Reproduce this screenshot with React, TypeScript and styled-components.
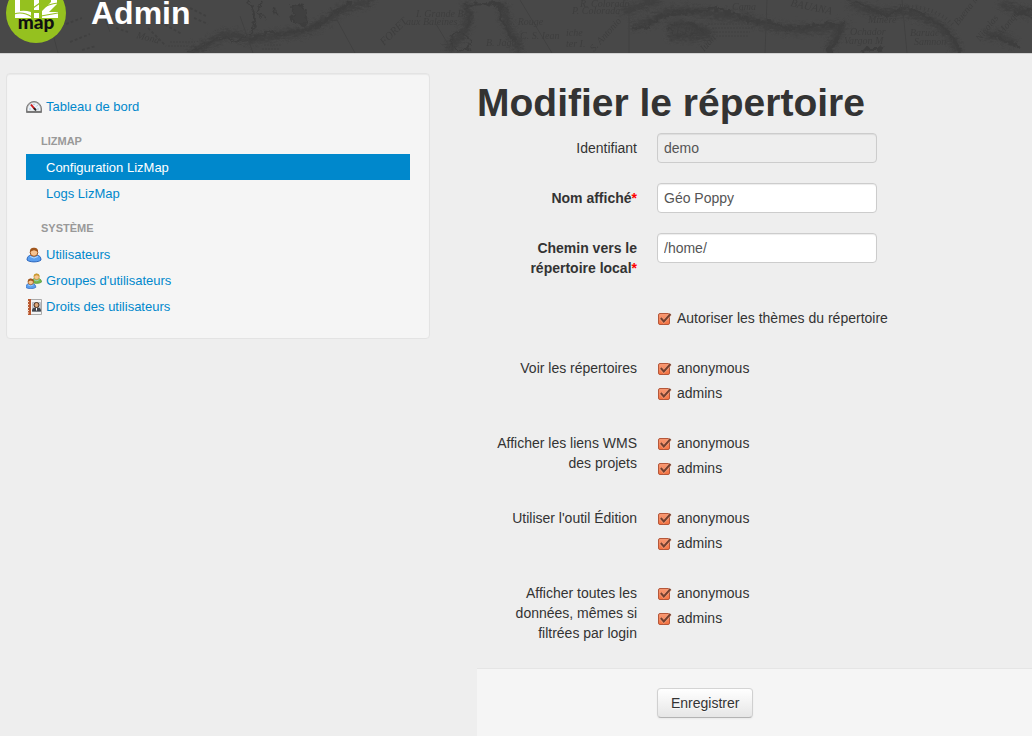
import React, { useState } from "react";
import styled, { createGlobalStyle, css } from "styled-components";

const GlobalStyle = createGlobalStyle`
  *, *::before, *::after { box-sizing: border-box; }
  html { background: #eee; }
  body {
    margin: 0;
    background: #eee;
    color: #333;
    font-family: "Liberation Sans", Arial, Helvetica, sans-serif;
    font-size: 14px;
    line-height: 20px;
  }
`;

const Page = styled.div`
  display: flex;
  flex-direction: column;
  min-height: 100vh;
`;

const Header = styled.header`
  position: relative;
  display: flex;
  align-items: flex-end;
  gap: 25px;
  height: 54px;
  padding: 0 6px 10px;
  overflow: hidden;
  background: #484848;
  border-bottom: 1px solid #d2d2d2;
`;

const HeaderMap = styled.svg`
  position: absolute;
  inset: 0;
  width: 100%;
  height: 100%;
`;

const Logo = styled.svg`
  position: relative;
  flex: none;
  width: 60px;
  height: 60px;
`;

const SiteTitle = styled.div`
  position: relative;
  padding-bottom: 10px;
  color: #fff;
  font-size: 32px;
  font-weight: bold;
  line-height: 40px;
`;

const Columns = styled.div`
  display: grid;
  grid-template-columns: minmax(0, 424fr) minmax(0, 555fr);
  column-gap: 47px;
  align-items: start;
  padding: 19px 0 0 6px;
`;

const Sidebar = styled.nav`
  padding: 19px;
  background: #f5f5f5;
  border: 1px solid #e3e3e3;
  border-radius: 4px;
  box-shadow: inset 0 1px 1px rgba(0, 0, 0, 0.05);
  font-size: 13px;
`;

const NavList = styled.ul`
  margin: 0;
  padding: 0;
  list-style: none;
`;

const NavHeading = styled.h2`
  margin: 9px 0 0;
  padding: 3px 15px;
  color: #999;
  font-size: 11px;
  font-weight: bold;
  line-height: 20px;
  text-transform: uppercase;
`;

const NavLink = styled.a<{ $active?: boolean }>`
  display: grid;
  grid-template-columns: 16px 1fr;
  column-gap: 4px;
  align-items: center;
  padding: 4px 0 2px;
  color: ${(p) => (p.$active ? "#fff" : "#08c")};
  background: ${(p) => (p.$active ? "#08c" : "transparent")};
  text-decoration: none;
`;

const NavIcon = styled.svg`
  display: block;
  width: 16px;
  height: 16px;
`;

const NavText = styled.span`
  grid-column: 2;
`;

const Main = styled.main`
  padding-top: 10px;
`;

const PageTitle = styled.h1`
  margin: 0 0 10px;
  font-size: 39px;
  font-weight: bold;
  line-height: 40px;
`;

const rowStyle = css`
  display: grid;
  grid-template-columns: 160px minmax(0, 1fr);
  column-gap: 20px;
  align-items: start;
  margin: 0 0 20px;
`;

const Row = styled.div`
  ${rowStyle}
`;

const labelStyle = css`
  padding: 5px 0;
  text-align: right;
`;

const Label = styled.label<{ $strong?: boolean }>`
  ${labelStyle}
  font-weight: ${(p) => (p.$strong ? "bold" : "normal")};
`;

const GroupLabel = styled.span`
  ${labelStyle}
`;

const Required = styled.span`
  color: #f00;
`;

const TextInput = styled.input`
  width: 220px;
  max-width: 100%;
  height: 30px;
  padding: 4px 6px;
  border: 1px solid #ccc;
  border-radius: 4px;
  background: #fff;
  box-shadow: inset 0 1px 1px rgba(0, 0, 0, 0.075);
  color: #555;
  font: inherit;

  &:disabled {
    background: #eee;
    opacity: 1;
  }
`;

const Choices = styled.div`
  grid-column: 2;
  padding-bottom: 5px;
`;

const Choice = styled.label`
  display: grid;
  grid-template-columns: 16px 1fr;
  column-gap: 4px;
  align-items: center;
  padding-top: 5px;
`;

const TickHolder = styled.span`
  position: relative;
  width: 16px;
  height: 16px;
`;

const TickInput = styled.input`
  appearance: none;
  display: block;
  width: 16px;
  height: 16px;
  margin: 0;
`;

const TickMark = styled.svg`
  position: absolute;
  inset: 0;
  width: 16px;
  height: 16px;
  pointer-events: none;
`;

const Actions = styled.div`
  padding: 19px 20px 20px 180px;
  background: #f5f5f5;
  border-top: 1px solid #e5e5e5;
`;

const SubmitButton = styled.button`
  height: 30px;
  padding: 4px 13px;
  border: 1px solid #ccc;
  border-color: #d4d4d4 #d0d0d0 #b3b3b3;
  border-radius: 4px;
  background: linear-gradient(to bottom, #fff, #e6e6e6);
  box-shadow: inset 0 1px 0 rgba(255, 255, 255, 0.2), 0 1px 2px rgba(0, 0, 0, 0.05);
  color: #333;
  font: inherit;
  line-height: 20px;
  text-shadow: 0 1px 1px rgba(255, 255, 255, 0.75);
`;

function OldMap() {
  return (
    <HeaderMap aria-hidden="true">
      <defs>
        <filter id="rough" x="-5%" y="-20%" width="110%" height="140%">
          <feTurbulence type="fractalNoise" baseFrequency="0.16" numOctaves="3" seed="4" />
          <feDisplacementMap in="SourceGraphic" scale="9" xChannelSelector="R" yChannelSelector="G" />
        </filter>
        <filter id="shade" x="-5%" y="-30%" width="110%" height="160%">
          <feGaussianBlur stdDeviation="2" result="soft" />
          <feTurbulence type="fractalNoise" baseFrequency="0.2 0.5" numOctaves="2" seed="9" result="noise" />
          <feDisplacementMap in="soft" in2="noise" scale="12" xChannelSelector="R" yChannelSelector="G" />
        </filter>
        <pattern id="oldmap" width="1032" height="53" patternUnits="userSpaceOnUse">
          <rect width="1032" height="53" fill="#484848" />
          <g fill="none" stroke="#3e3e3e" strokeWidth="8" opacity="0.9" filter="url(#shade)">
            <path d="M190 53Q205 46 218 38T248 40Q285 34 305 31Q325 22 341 10L372 0" />
            <path d="M466 3Q472 20 462 36Q454 40 448 50M502 3Q505 22 512 36Q522 44 516 52" />
            <path d="M632 26Q650 24 662 14Q680 8 700 12Q724 16 748 18Q758 24 780 28Q800 32 842 26Q834 42 828 50" />
            <path d="M850 2Q870 14 890 12Q912 10 928 20Q948 26 958 52M985 36Q1000 32 1014 44" />
            <path d="M668 26Q684 22 704 30T668 36M622 12Q640 6 660 0M1000 4L1032 14" />
          </g>
          <g fill="none" stroke="#3d3d3d" strokeWidth="1.6" filter="url(#rough)">
            <path d="M184 53Q202 49 214 40Q224 35 232 42Q242 40 251 32Q258 26 254 14L249 0" />
            <path d="M250 40L266 32L280 35L302 31Q320 25 330 16L350 3" strokeWidth="3" />
            <path d="M293 6Q300 3 307 9L306 25L292 21Z" fill="#404040" />
            <path d="M262 2L258 12L266 20M272 8L278 16" />
            <path d="M465 6Q480 2 501 5L500 18L508 30L514 40M465 8Q474 18 466 28" strokeWidth="3" />
            <path d="M450 42Q454 30 464 34Q474 42 468 50Q456 54 450 42Z" />
            <path d="M633 29Q648 28 658 18Q672 12 690 12Q710 8 722 10L748 20M746 22L768 21L786 29L804 27L824 25L842 24L836 42L828 52" strokeWidth="3" />
            <path d="M667 28Q684 18 704 29Q696 38 674 35Z" />
            <path d="M854 0L872 9L886 15L900 10Q920 8 932 20L946 28L956 44L962 53" strokeWidth="3" />
            <path d="M1032 16L1018 14L1032 8M992 35L1010 42L1020 48M860 53Q872 46 884 50" strokeWidth="3" />
          </g>
          <g fill="none" stroke="#404040">
            <path d="M44 0L58 53M98 0L110 32M240 16L253 53M330 7L355 53M520 0L552 53M629 4V53M767 0L765 53M902 0L907 53M436 24L448 44" />
            <path d="M900 7Q934 5 953 25" strokeWidth="4" strokeDasharray="1 3" />
            <path d="M708 24H756M712 28H754M704 32H750M716 36H748M170 42H195M168 46H188M264 45H282M262 49H280" strokeDasharray="2 1" />
            <path d="M66 24L82 18M70 42L90 34M82 50L96 46M108 14L122 20M116 28L128 32M190 8L206 16M194 18L208 24M148 28L166 46M156 20L182 34" strokeDasharray="3 2" strokeWidth="2" />
          </g>
          <g fill="#3d3d3d" fontFamily="Liberation Serif, serif" fontStyle="italic" fontSize="10">
            <text x="416" y="17">I. Grande B.</text>
            <text x="406" y="25">aux Baleines</text>
            <text x="506" y="25">C. Rouge</text>
            <text x="520" y="39">C. S. Iean</text>
            <text x="486" y="46">B. Jago</text>
            <text x="580" y="7">R. Colorado</text>
            <text x="572" y="14">P. Colorada</text>
            <text x="566" y="36">iche</text>
            <text x="566" y="47">ter I.</text>
            <text x="868" y="23">Minere</text>
            <text x="850" y="35">Ochador</text>
            <text x="844" y="44">Vargon M</text>
            <text x="910" y="36">Baruac e</text>
            <text x="914" y="45">Samnon</text>
            <text x="676" y="34">I. Pinos</text>
            <text x="732" y="10">Cama</text>
            <text transform="translate(790 6) rotate(12)" fontSize="11">BAUANA</text>
            <text transform="translate(384 46) rotate(-45)" fontSize="11">FORET</text>
            <text transform="translate(594 52) rotate(-48)">S. Antonio</text>
            <text transform="translate(958 26) rotate(-52)">Buena M</text>
            <text transform="translate(980 42) rotate(-52)">Nicolas</text>
            <text transform="translate(1002 36) rotate(-52)">Monquia</text>
            <text transform="translate(704 52) rotate(-48)">Iuan</text>
            <text transform="translate(136 38) rotate(14)">Mona</text>
          </g>
        </pattern>
      </defs>
      <rect width="100%" height="100%" fill="url(#oldmap)" />
    </HeaderMap>
  );
}

function LizmapLogo() {
  return (
    <Logo viewBox="0 0 60 60" role="img" aria-label="Lizmap">
      <circle cx="30" cy="30" r="30" fill="#95c11f" />
      <g fill="#fff">
        <path d="M9 6h5v22q5-1 11 1v6H9z" />
        <path d="M28 12h5v15h-5zM28 30h5v5h-5z" />
        <path d="M36 12h15v9l-8 8h9v6H36v-7l9-9v-2h-9z" />
      </g>
      <g fill="none" stroke="#95c11f" strokeWidth="1.200">
        <path d="M8 31Q17 28 26 34M27 25L34 20M35 26Q42 21 52 20M35 33L52 30" />
      </g>
      <text x="30" y="46" textAnchor="middle" fill="#111" fontFamily="Lato, sans-serif" fontWeight="900" fontSize="19">
        map
      </text>
    </Logo>
  );
}

function GaugeIcon() {
  return (
    <NavIcon viewBox="0 0 16 16" aria-hidden="true">
      <path d="M.5 13.5V10a7.5 7.5 0 0 1 15 0v3.500z" fill="#a4a4a4" stroke="#7c7c7c" />
      <path d="M2 11.500V10a6 6 0 0 1 12 0v1.500z" fill="#e9f1f8" stroke="#fff" strokeWidth=".6" />
      <path d="M3.500 10h1M4.800 6.500l.8.800M8 4.800v1M11.300 6.500l-.8.800M12.500 10h-1" stroke="#7d9abb" />
      <path d="M5 5.500l4 5" stroke="#d01818" strokeWidth="2" />
      <path d="M8 9l2 2.500" stroke="#222" strokeWidth="2" />
      <path d="M1 12.500h14" stroke="#777" />
    </NavIcon>
  );
}

function PersonShape({ shirt, edge, hair }: { shirt: string; edge: string; hair: string }) {
  return (
    <>
      <path d="M1 13c0-3.500 2-4.500 4-5h6c2 .5 4 1.500 4 5-2.500 2.500-11.500 2.500-14 0z" fill={shirt} stroke={edge} />
      <path d="M4 9.500q4 3 8 0" fill="none" stroke="#b5dcff" />
      <circle cx="8" cy="5.500" r="3.800" fill="#f7c491" stroke={hair} />
      <path d="M4 5.500C3.500 2 5.500.8 8 .8s4.500 1.200 4 4.700C11 4 9 3.800 8 3.300 7 3.800 5 4 4 5.500z" fill={hair} />
    </>
  );
}

function UserIcon() {
  return (
    <NavIcon viewBox="0 0 16 16" aria-hidden="true">
      <PersonShape shirt="#5a9ff0" edge="#2f68bd" hair="#a0561c" />
    </NavIcon>
  );
}

function GroupIcon() {
  return (
    <NavIcon viewBox="0 0 16 16" aria-hidden="true">
      <g transform="translate(5 0) scale(.7)">
        <PersonShape shirt="#77b94c" edge="#4a9136" hair="#c99a30" />
      </g>
      <g transform="translate(-1 5) scale(.72)">
        <PersonShape shirt="#5a9ff0" edge="#2f68bd" hair="#a0561c" />
      </g>
    </NavIcon>
  );
}

function RightsIcon() {
  return (
    <NavIcon viewBox="0 0 16 16" aria-hidden="true">
      <path d="M2.500.5h13v15h-13z" fill="#f4f4f4" stroke="#aaa" />
      <path d="M2 0h3v16H2z" fill="#b9582f" />
      <path d="M1 2.500h2M1 5.500h2M1 8.500h2M1 11.500h2M1 14h2" stroke="#f5dfd0" />
      <path d="M6.500 3.500h8v9h-8z" fill="#c9cdd3" stroke="#b9bdc3" />
      <path d="M6 12.500c0-3.500 1.500-4 4.500-4s4.500.5 4.500 4z" fill="#42464d" />
      <circle cx="10.500" cy="6" r="2.500" fill="#dea77a" stroke="#49301f" />
      <path d="M10 9h1v2.500h-1z" fill="#fff" />
    </NavIcon>
  );
}

function Tick({ label }: { label: string }) {
  const [checked, setChecked] = useState(true);
  return (
    <Choice>
      <TickHolder>
        <TickInput type="checkbox" checked={checked} onChange={(e) => setChecked(e.target.checked)} />
        <TickMark viewBox="0 0 16 16" aria-hidden="true">
          <defs>
            <linearGradient id="tickFill" x1="0" y1="0" x2="0" y2="1">
              <stop offset="0" stopColor="#f79a75" />
              <stop offset="1" stopColor="#f4713f" />
            </linearGradient>
          </defs>
          <rect x="1.500" y="3.500" width="11" height="11" rx="1.500" fill={checked ? "url(#tickFill)" : "#fff"} stroke="#b4573a" />
          {checked && (
            <>
              <path d="M3.800 8l3 3.500 6.700-7.500" fill="none" stroke="#f9b79c" strokeWidth="3.500" opacity=".5" />
              <path d="M3.800 8l3 3.500 6.700-7.500" fill="none" stroke="#74402f" strokeWidth="2" />
            </>
          )}
        </TickMark>
      </TickHolder>
      {label}
    </Choice>
  );
}

function RightsRow({ label }: { label: string }) {
  return (
    <Row role="group" aria-label={label}>
      <GroupLabel>{label}</GroupLabel>
      <Choices>
        <Tick label="anonymous" />
        <Tick label="admins" />
      </Choices>
    </Row>
  );
}

const rights = [
  "Voir les répertoires",
  "Afficher les liens WMS des projets",
  "Utiliser l'outil Édition",
  "Afficher toutes les données, mêmes si filtrées par login",
];

export default function App() {
  return (
    <Page>
      <GlobalStyle />
      <Header>
        <OldMap />
        <LizmapLogo />
        <SiteTitle>Admin</SiteTitle>
      </Header>
      <Columns>
        <Sidebar>
          <NavList>
            <li><NavLink href="#dashboard"><GaugeIcon /><NavText>Tableau de bord</NavText></NavLink></li>
          </NavList>
          <NavHeading>Lizmap</NavHeading>
          <NavList>
            <li><NavLink href="#config" $active><NavText>Configuration LizMap</NavText></NavLink></li>
            <li><NavLink href="#logs"><NavText>Logs LizMap</NavText></NavLink></li>
          </NavList>
          <NavHeading>Système</NavHeading>
          <NavList>
            <li><NavLink href="#users"><UserIcon /><NavText>Utilisateurs</NavText></NavLink></li>
            <li><NavLink href="#groups"><GroupIcon /><NavText>Groupes d'utilisateurs</NavText></NavLink></li>
            <li><NavLink href="#rights"><RightsIcon /><NavText>Droits des utilisateurs</NavText></NavLink></li>
          </NavList>
        </Sidebar>
        <Main>
          <PageTitle>Modifier le répertoire</PageTitle>
          <form onSubmit={(e) => e.preventDefault()}>
            <Row>
              <Label htmlFor="repository">Identifiant</Label>
              <TextInput id="repository" type="text" defaultValue="demo" disabled />
            </Row>
            <Row>
              <Label htmlFor="name" $strong>Nom affiché<Required>*</Required></Label>
              <TextInput id="name" type="text" defaultValue="Géo Poppy" required />
            </Row>
            <Row>
              <Label htmlFor="path" $strong>Chemin vers le répertoire local<Required>*</Required></Label>
              <TextInput id="path" type="text" defaultValue="/home/" required />
            </Row>
            <Row>
              <Choices>
                <Tick label="Autoriser les thèmes du répertoire" />
              </Choices>
            </Row>
            {rights.map((label) => (
              <RightsRow key={label} label={label} />
            ))}
            <Actions>
              <SubmitButton type="submit">Enregistrer</SubmitButton>
            </Actions>
          </form>
        </Main>
      </Columns>
    </Page>
  );
}
